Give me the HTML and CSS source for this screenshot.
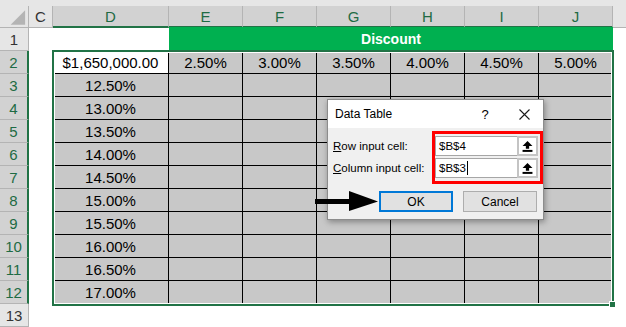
FILE: index.html
```html
<!DOCTYPE html>
<html>
<head>
<meta charset="utf-8">
<link rel="stylesheet" href="styles.css">
</head>
<body>
<div class="sheet">
  <div class="topstrip"></div>
  <div class="grid">
    <div class="hd corner"><svg class="corner-tri" width="29" height="22" viewBox="0 0 29 22"><polygon points="26,4 26,19 11,19" fill="#b4b4b4"/></svg></div>
    <div class="hd col">C</div>
    <div class="hd col sel">D</div>
    <div class="hd col sel">E</div>
    <div class="hd col sel">F</div>
    <div class="hd col sel">G</div>
    <div class="hd col sel">H</div>
    <div class="hd col sel">I</div>
    <div class="hd col sel">J</div>
    <div class="hd col fill"></div>

    <div class="hd row">1</div>
    <div class="c"></div><div class="c"></div>
    <div class="c disc">Discount</div>
    <div class="c"></div>

    <div class="hd row sel">2</div>
    <div class="c"></div>
    <div class="c t w">$1,650,000.00</div>
    <div class="c t">2.50%</div><div class="c t">3.00%</div><div class="c t">3.50%</div><div class="c t">4.00%</div><div class="c t">4.50%</div><div class="c t">5.00%</div>
    <div class="c"></div>

    <div class="hd row sel">3</div><div class="c"></div><div class="c t">12.50%</div><div class="c t"></div><div class="c t"></div><div class="c t"></div><div class="c t"></div><div class="c t"></div><div class="c t"></div><div class="c"></div>
    <div class="hd row sel">4</div><div class="c"></div><div class="c t">13.00%</div><div class="c t"></div><div class="c t"></div><div class="c t"></div><div class="c t"></div><div class="c t"></div><div class="c t"></div><div class="c"></div>
    <div class="hd row sel">5</div><div class="c"></div><div class="c t">13.50%</div><div class="c t"></div><div class="c t"></div><div class="c t"></div><div class="c t"></div><div class="c t"></div><div class="c t"></div><div class="c"></div>
    <div class="hd row sel">6</div><div class="c"></div><div class="c t">14.00%</div><div class="c t"></div><div class="c t"></div><div class="c t"></div><div class="c t"></div><div class="c t"></div><div class="c t"></div><div class="c"></div>
    <div class="hd row sel">7</div><div class="c"></div><div class="c t">14.50%</div><div class="c t"></div><div class="c t"></div><div class="c t"></div><div class="c t"></div><div class="c t"></div><div class="c t"></div><div class="c"></div>
    <div class="hd row sel">8</div><div class="c"></div><div class="c t">15.00%</div><div class="c t"></div><div class="c t"></div><div class="c t"></div><div class="c t"></div><div class="c t"></div><div class="c t"></div><div class="c"></div>
    <div class="hd row sel">9</div><div class="c"></div><div class="c t">15.50%</div><div class="c t"></div><div class="c t"></div><div class="c t"></div><div class="c t"></div><div class="c t"></div><div class="c t"></div><div class="c"></div>
    <div class="hd row sel">10</div><div class="c"></div><div class="c t">16.00%</div><div class="c t"></div><div class="c t"></div><div class="c t"></div><div class="c t"></div><div class="c t"></div><div class="c t"></div><div class="c"></div>
    <div class="hd row sel">11</div><div class="c"></div><div class="c t">16.50%</div><div class="c t"></div><div class="c t"></div><div class="c t"></div><div class="c t"></div><div class="c t"></div><div class="c t"></div><div class="c"></div>
    <div class="hd row sel">12</div><div class="c"></div><div class="c t">17.00%</div><div class="c t"></div><div class="c t"></div><div class="c t"></div><div class="c t"></div><div class="c t"></div><div class="c t"></div><div class="c"></div>
    <div class="hd row">13</div><div class="c"></div><div class="c"></div><div class="c"></div><div class="c"></div><div class="c"></div><div class="c"></div><div class="c"></div><div class="c"></div><div class="c"></div>
  </div>

  <div class="selection"></div>
  <div class="fill-handle"></div>

  <div class="dialog">
    <div class="dlg-title">
      <span class="dlg-name">Data Table</span>
      <span class="dlg-help">?</span>
      <svg class="dlg-close" width="11" height="11" viewBox="0 0 11 11"><path d="M0.5 0.5 L10.5 10.5 M10.5 0.5 L0.5 10.5" stroke="#1a1a1a" stroke-width="1.1" fill="none"/></svg>
    </div>
    <div class="dlg-body">
      <div class="dlg-form">
        <div class="dlg-labels">
          <div class="lbl"><u>R</u>ow input cell:</div>
          <div class="lbl"><u>C</u>olumn input cell:</div>
        </div>
        <div class="dlg-fields">
          <div class="field"><span class="val">$B$4</span><span class="pick"><svg width="11" height="11" viewBox="0 0 10 10"><polygon points="5,0 9.5,4.5 6.5,4.5 6.5,7 3.5,7 3.5,4.5 0.5,4.5" fill="#000"/><rect x="0.5" y="8.1" width="9" height="1.8" fill="#000"/></svg></span></div>
          <div class="field"><span class="val">$B$3<i class="caret"></i></span><span class="pick"><svg width="11" height="11" viewBox="0 0 10 10"><polygon points="5,0 9.5,4.5 6.5,4.5 6.5,7 3.5,7 3.5,4.5 0.5,4.5" fill="#000"/><rect x="0.5" y="8.1" width="9" height="1.8" fill="#000"/></svg></span></div>
        </div>
      </div>
      <div class="dlg-buttons">
        <div class="btn ok">OK</div>
        <div class="btn">Cancel</div>
      </div>
    </div>
  </div>

  <svg class="arrow" width="66" height="22" viewBox="0 0 66 22"><rect x="1" y="9" width="36" height="5" fill="#000"/><polygon points="35,1 64,11.5 35,21" fill="#000"/></svg>
</div>
</body>
</html>
```
FILE: styles.css
```css
body {
  margin: 0;
  background: #fff;
  font-family: "Liberation Sans", Arial, sans-serif;
}
.sheet {
  position: relative;
  width: 626px;
  height: 327px;
  overflow: hidden;
  background: #fff;
}
.topstrip {
  height: 6px;
  background: #e6e6e6;
}
.grid {
  display: grid;
  grid-template-columns: 29px 24px 116px repeat(6, 74px) 1fr;
  grid-template-rows: 22px repeat(13, 23px);
}
.hd {
  box-sizing: border-box;
  background: #e6e6e6;
  border-right: 1px solid #b4b4b4;
  border-bottom: 1px solid #b4b4b4;
  display: flex;
  align-items: center;
  justify-content: center;
  font-size: 15px;
  color: #333;
}
.hd.sel {
  background: #d2d2d2;
  color: #1e6b44;
}
.hd.col.sel {
  border-bottom: 2px solid #217346;
}
.hd.row.sel {
  border-right: 2px solid #217346;
}
.hd.fill {
  border-right: none;
}
.corner {
  position: relative;
  padding: 0;
}
.corner-tri {
  display: block;
}
.c {
  box-sizing: border-box;
  display: flex;
  align-items: center;
  justify-content: center;
  font-size: 15px;
  color: #000;
  background: #fff;
}
.t {
  background: #c8c8c8;
  border-right: 1px solid #000;
  border-bottom: 1px solid #000;
}
.t.w {
  background: #fff;
}
.disc {
  grid-column: span 6;
  background: #00b050;
  color: #fff;
  font-weight: bold;
  font-size: 14px;
  margin-top: -1px;
}
.selection {
  position: absolute;
  left: 52px;
  top: 50px;
  width: 562px;
  height: 256px;
  box-sizing: border-box;
  border: 2px solid #217346;
  box-shadow: inset 0 0 0 1px #fff;
}
.fill-handle {
  position: absolute;
  left: 609px;
  top: 301px;
  width: 7px;
  height: 7px;
  box-sizing: border-box;
  background: #217346;
  border: 1px solid #fff;
}
.dialog {
  position: absolute;
  left: 327px;
  top: 99px;
  width: 217px;
  height: 121px;
  box-sizing: border-box;
  border: 1px solid #8c8c8c;
  background: #f0f0f0;
  box-shadow: 1px 2px 6px rgba(0, 0, 0, 0.35);
  font-size: 11.5px;
  color: #000;
}
.dlg-title {
  height: 28px;
  background: #fff;
  display: flex;
  align-items: center;
  padding-left: 7px;
  padding-right: 13px;
}
.dlg-name {
  flex: 1;
  font-size: 12px;
}
.dlg-help {
  width: 20px;
  text-align: center;
  font-size: 13px;
  margin-right: 24px;
}
.dlg-close {
  display: block;
}
.dlg-body {
  padding-top: 3px;
}
.dlg-form {
  display: flex;
}
.dlg-labels {
  width: 104px;
  box-sizing: border-box;
  padding-left: 5px;
  padding-top: 5px;
  display: flex;
  flex-direction: column;
  gap: 2px;
}
.lbl {
  height: 20px;
  line-height: 20px;
  white-space: nowrap;
}
.dlg-fields {
  width: 111px;
  box-sizing: border-box;
  border: 3px solid #ff0000;
  padding: 2px 2px 3px 0;
  display: flex;
  flex-direction: column;
  gap: 2px;
}
.field {
  height: 20px;
  box-sizing: border-box;
  display: flex;
  background: #fff;
  border: 1px solid #a6a6a6;
}
.val {
  flex: 1;
  display: flex;
  align-items: center;
  padding-left: 3px;
}
.caret {
  display: inline-block;
  width: 1px;
  height: 14px;
  background: #000;
  margin-left: 1px;
}
.pick {
  width: 21px;
  box-sizing: border-box;
  border: 2px solid #c4c4c4;
  background: #fff;
  display: flex;
  align-items: center;
  justify-content: center;
  margin: -1px -1px -1px 0;
  height: 20px;
}
.pick svg {
  display: block;
}
.dlg-buttons {
  display: flex;
  gap: 10px;
  padding-left: 51px;
  margin-top: 7px;
}
.btn {
  width: 74px;
  height: 21px;
  box-sizing: border-box;
  background: #e1e1e1;
  border: 1px solid #adadad;
  display: flex;
  align-items: center;
  justify-content: center;
  font-size: 12px;
}
.btn.ok {
  border: 2px solid #0078d7;
}
.arrow {
  position: absolute;
  left: 314px;
  top: 190px;
  display: block;
}
```
